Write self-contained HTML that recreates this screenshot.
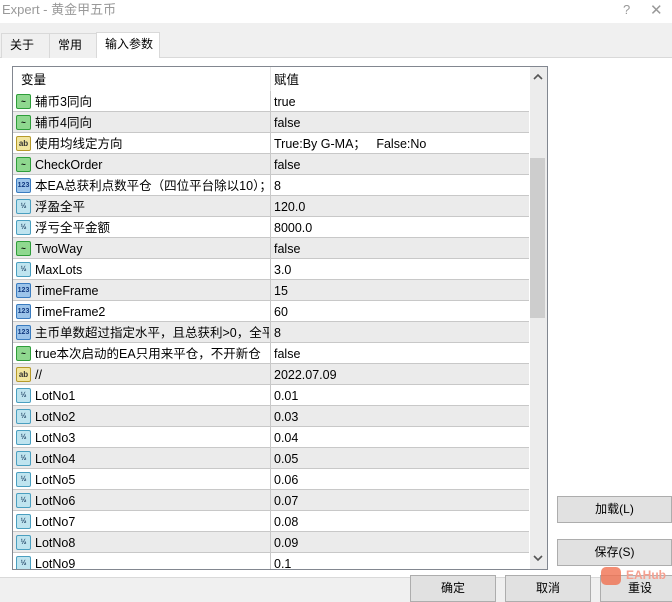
<!DOCTYPE html>
<html><head><meta charset="utf-8"><style>
*{margin:0;padding:0;box-sizing:border-box}
body{width:672px;height:593px;overflow:hidden;background:#f0f0f0;font-family:"Liberation Sans","Noto Sans CJK SC",sans-serif;font-size:12px;color:#000;position:relative}
.abs{position:absolute}
.title{left:0;top:0;width:672px;height:23px;background:#fff;color:#999;font-size:13px;padding:1px 0 0 2px;line-height:18px}
.tab{top:33px;height:25px;border:1px solid #d9d9d9;border-bottom:none;background:#f0f0f0;padding:0 0 0 8px;font-size:12px;line-height:23px}
.panel{left:0;top:57px;width:672px;height:521px;background:#fff;border-top:1px solid #d9d9d9;border-bottom:1px solid #d9d9d9}
.list{left:12px;top:66px;width:536px;height:504px;border:1px solid #828790;background:#fff;overflow:hidden}
.row{position:absolute;left:0;width:516px;height:21px;border-bottom:1px solid #c8c8c8}
.row.g{background:#ebebeb}
.row span{line-height:22px;height:20px;overflow:hidden;font-size:12.5px}
.row span.n{position:absolute;left:22px;top:0;white-space:nowrap;width:234px}
.row span.v{position:absolute;left:261px;top:0;white-space:nowrap}
.row .col{position:absolute;left:257px;top:0;width:1px;height:21px;background:#c8c8c8}
.ic{position:absolute;left:3px;top:3px;width:15px;height:15px;border-radius:2px;font-size:8px;font-weight:bold;text-align:center;line-height:13px}
.b{background:#8fd88f;border:1px solid #2e9d3a}
.s{background:#f2e6a0;border:1px solid #b69a2a;color:#333}
.i{background:#9cc4ea;border:1px solid #3a7cc0;color:#123a80;font-size:7px}
.d{background:#bfe4ef;border:1px solid #4a9fc0;color:#246;font-size:7px}
.btn{height:27px;background:#e1e1e1;border:1px solid #adadad;text-align:center;line-height:25px;font-size:12px}
</style></head><body>
<div class="abs title">Expert - 黄金甲五币</div>
<div class="abs" style="left:623px;top:2px;color:#999;font-size:13px">?</div>
<div class="abs" style="left:650px;top:1px;color:#999;font-size:15px">✕</div>
<div class="abs panel"></div>
<div class="abs tab" style="left:1px;width:49px">关于</div>
<div class="abs tab" style="left:49px;width:48px">常用</div>
<div class="abs tab" style="left:96px;top:32px;height:26px;width:64px;background:#fff">输入参数</div>
<div class="abs list">
<div class="row" style="top:0;height:24px;border-bottom:none"><span class="n" style="left:8px;top:2px">变量</span><div class="col" style="height:24px;background:#e5e5e5"></div><span class="v" style="top:2px">赋值</span></div>
<div id="rows"></div>
<div class="abs" style="left:517px;top:0;width:17px;height:502px;background:#ececec"></div>
<div class="abs" style="left:517px;top:91px;width:15px;height:160px;background:#cdcdcd"></div>
<svg class="abs" style="left:519px;top:6px" width="12" height="8"><path d="M2 6L6 2L10 6" stroke="#555" stroke-width="1.6" fill="none"/></svg>
<svg class="abs" style="left:519px;top:487px" width="12" height="8"><path d="M2 2L6 6L10 2" stroke="#555" stroke-width="1.6" fill="none"/></svg>
</div>
<div class="abs btn" style="left:557px;top:496px;width:115px">加载(L)</div>
<div class="abs btn" style="left:557px;top:539px;width:115px">保存(S)</div>
<div class="abs btn" style="left:410px;top:575px;width:86px">确定</div>
<div class="abs btn" style="left:505px;top:575px;width:86px">取消</div>
<div class="abs btn" style="left:600px;top:575px;width:80px">重设</div>
<div class="abs" style="left:601px;top:567px;width:20px;height:18px;background:#f07050;border-radius:5px;opacity:.8"></div>
<div class="abs" style="left:626px;top:568px;color:#f5a090;font-weight:bold;font-size:12px">EAHub</div>
<script>
var d=[["b","辅币3同向","true"],["b","辅币4同向","false"],["s","使用均线定方向","True:By G-MA；&nbsp;&nbsp;&nbsp;False:No"],["b","CheckOrder","false"],["i","本EA总获利点数平仓（四位平台除以10）；","8"],["d","浮盈全平","120.0"],["d","浮亏全平金额","8000.0"],["b","TwoWay","false"],["d","MaxLots","3.0"],["i","TimeFrame","15"],["i","TimeFrame2","60"],["i","主币单数超过指定水平，且总获利>0，全平","8"],["b","true本次启动的EA只用来平仓，不开新仓","false"],["s","//","2022.07.09"]];
for(var k=1;k<=9;k++)d.push(["d","LotNo"+k,["0.01","0.03","0.04","0.05","0.06","0.07","0.08","0.09","0.1"][k-1]]);
var t={b:"~",s:"ab",i:"123",d:"½"},h="";
d.forEach(function(r,j){h+='<div class="row'+(j%2?' g':'')+'" style="top:'+(24+21*j)+'px"><div class="ic '+r[0]+'">'+t[r[0]]+'</div><span class="n">'+r[1]+'</span><div class="col"></div><span class="v">'+r[2]+'</span></div>';});
document.getElementById("rows").innerHTML=h;
</script>
</body></html>
